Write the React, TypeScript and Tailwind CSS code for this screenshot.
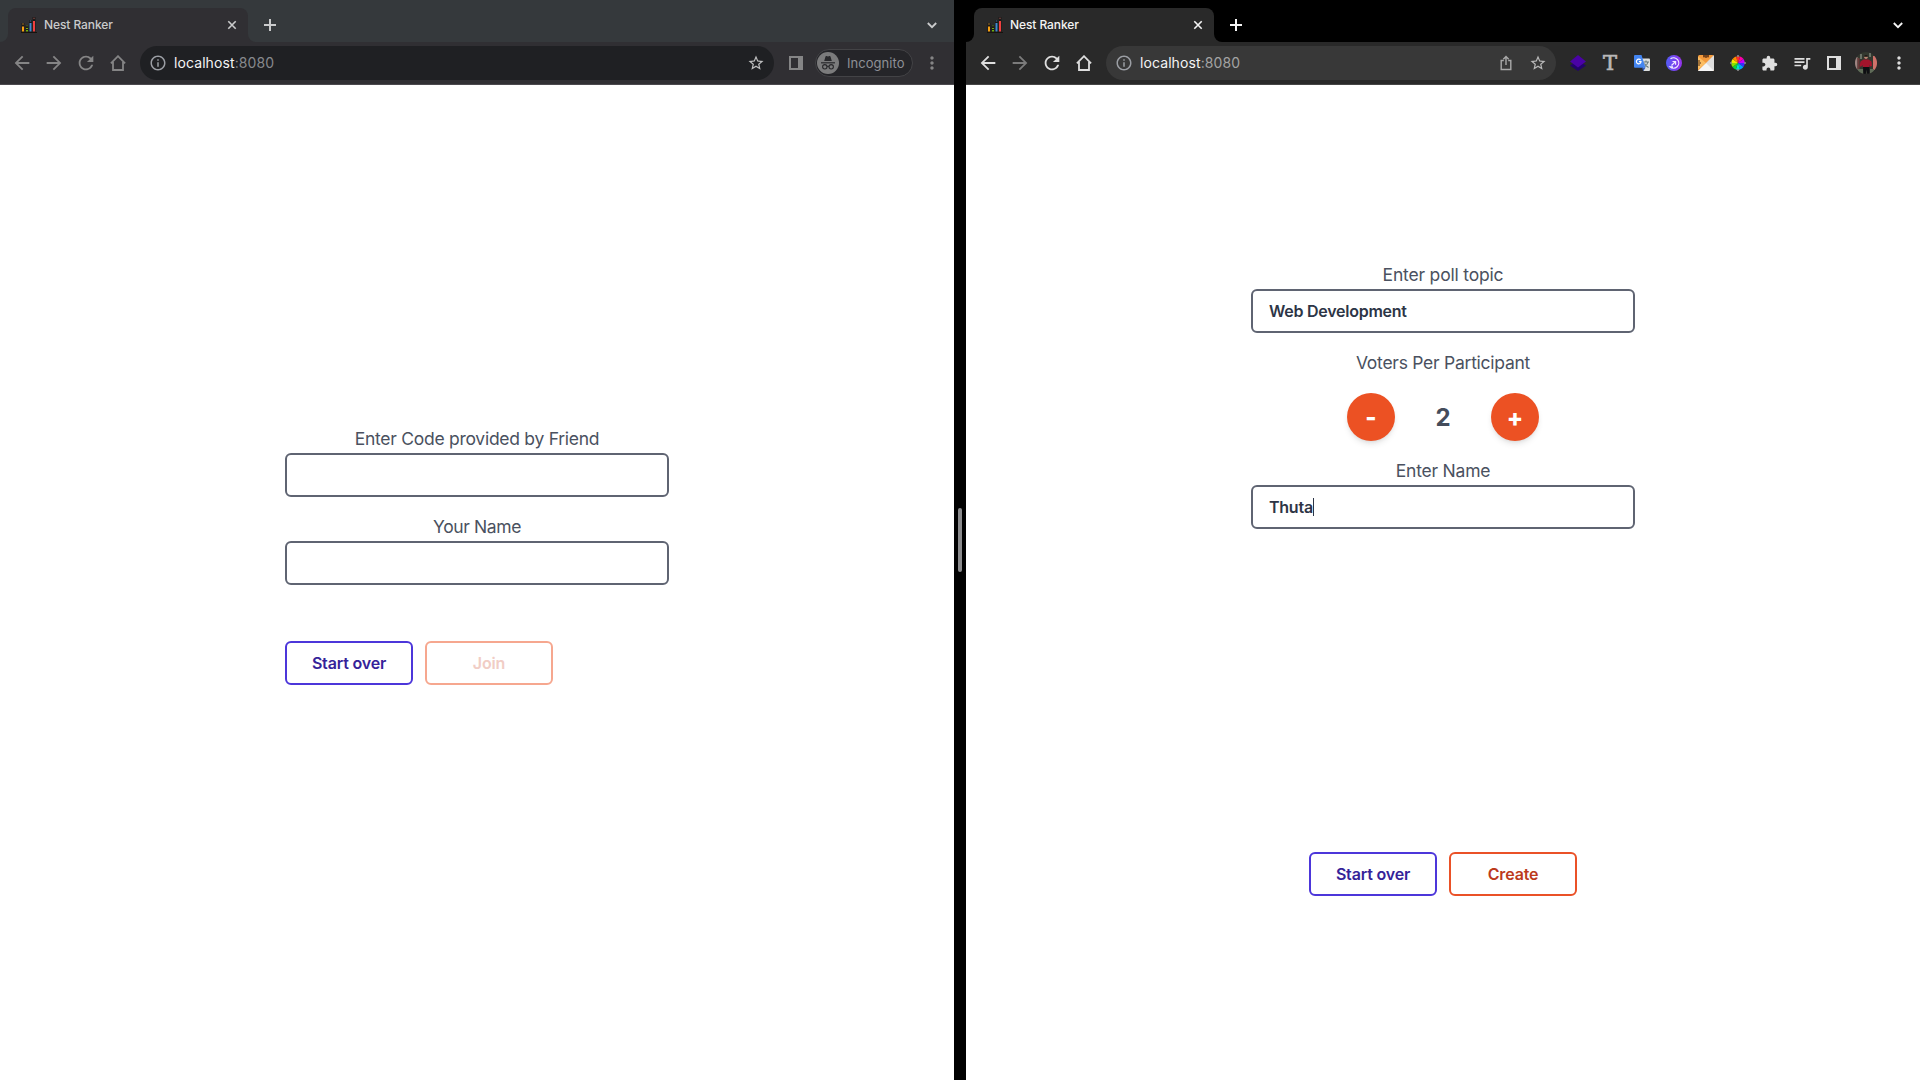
import type { ReactNode } from "react";
import {
  MdArrowBack,
  MdArrowForward,
  MdExtension,
  MdInfoOutline,
  MdMoreVert,
  MdQueueMusic,
  MdRefresh,
  MdStarBorder,
} from "react-icons/md";

function Favicon() {
  return (
    <svg width="16" height="16" viewBox="0 0 16 16" className="shrink-0">
      <path d="M0 15.500h16" stroke="#17130f" strokeWidth="1" />
      <path d="M2 6v9M6 8.500v6.500M9.500 3v12M13 0v15" stroke="#1c1917" strokeWidth="3" />
      <path d="M2 9.500v5" stroke="#f8a010" strokeWidth="2" />
      <path d="M6 11v1m0 1v1.500" stroke="#6fae10" strokeWidth="2" />
      <path d="M9.500 6v8.500" stroke="#3f8ad0" strokeWidth="2" />
      <path d="M13 4v10.500" stroke="#f04040" strokeWidth="2" />
      <path d="M2 6.500v1" stroke="#b88433" strokeWidth="1.600" />
      <path d="M6 8.500v.8" stroke="#5d8c1f" strokeWidth="1.600" />
      <path d="M9.500 3.500v1" stroke="#3b6f9c" strokeWidth="1.600" />
      <path d="M13 .8v1" stroke="#8d4a4a" strokeWidth="1.600" />
    </svg>
  );
}

function HomeIcon() {
  return (
    <svg width="16" height="16" viewBox="0 0 16 16" fill="none" stroke="currentColor" strokeWidth="1.800">
      <path d="M.9 8.300 8 1.200l7.100 7.100M3 7v8h10V7" strokeLinejoin="miter" />
    </svg>
  );
}

function PanelIcon() {
  return (
    <svg width="14" height="14" viewBox="0 0 14 14" fill="currentColor">
      <path fillRule="evenodd" d="M0 0h14v14H0zM2 2v10h7V2z" />
    </svg>
  );
}

function ShareIcon() {
  return (
    <svg width="12" height="16" viewBox="0 0 12 16" fill="none" stroke="currentColor" strokeWidth="1.400">
      <path d="M3.800 5.500H1.200v9h9.600v-9H8.200" />
      <path d="M6 10V1.800M3.300 4.300 6 1.600l2.700 2.700" />
    </svg>
  );
}

function ChevronDown() {
  return (
    <svg width="10" height="7" viewBox="0 0 10 7" fill="none" stroke="currentColor" strokeWidth="1.800">
      <path d="m.8 1 4.200 4.200L9.200 1" />
    </svg>
  );
}

function LayersIcon() {
  return (
    <svg width="16" height="16" viewBox="0 0 16 16">
      <path d="m0 10.500 8-5 8 5-8 5.500z" fill="#22036b" />
      <path d="m0 6.500 8-6.500 8 6.500-8 6z" fill="#4a02a6" />
    </svg>
  );
}

function TranslateIcon() {
  return (
    <svg width="16" height="16" viewBox="0 0 16 16">
      <path d="M7 3.500h8a1 1 0 0 1 1 1V15a1 1 0 0 1-1 1H9.500z" fill="#dcdedd" />
      <path d="M9.500 7h5.500M12 5.500V7M14 7c-.5 2.500-2 4-4 5.200M10.500 8.500c.8 1.800 2 3 4 4" stroke="#63777a" strokeWidth="1.100" fill="none" />
      <path d="M1 0h6.500l4 12.800H1a1 1 0 0 1-1-1V1a1 1 0 0 1 1-1z" fill="#4385f1" />
      <path d="M8 12.800h3.500L9.300 16z" fill="#3058b5" />
      <path d="M6.600 5.200A2.300 2.300 0 1 0 7 6.700H4.900" stroke="#fff" strokeWidth="1.200" fill="none" />
    </svg>
  );
}

function ArcIcon() {
  return (
    <svg width="16" height="16" viewBox="0 0 16 16">
      <defs>
        <linearGradient id="arc-fill" x1="0" y1="0" x2="1" y2="0">
          <stop offset="0" stopColor="#535cf5" />
          <stop offset="1" stopColor="#9632ec" />
        </linearGradient>
      </defs>
      <circle cx="8" cy="8" r="8" fill="url(#arc-fill)" />
      <g fill="none" stroke="#efe9ff" strokeWidth="1.200">
        <path d="M4.500 3.800A5.200 5.200 0 1 1 4 11.800H7" />
        <path d="M5.500 10.500 9.300 6.800M6.500 6.500h3.100v3.200" />
      </g>
    </svg>
  );
}

function RulerIcon() {
  return (
    <svg width="16" height="16" viewBox="0 0 16 16">
      <rect width="16" height="16" rx="1.500" fill="#f39a3c" />
      <path d="M0 16 16 0v14.500a1.500 1.500 0 0 1-1.500 1.500z" fill="#dedede" />
      <path d="M0 16 8 8l8 8z" fill="#f5f5f5" />
      <path d="M0 1.500v13L8 8z" fill="#fbbd62" />
      <path d="M5 0h6v2.500H5z" fill="#a85f20" />
      <path d="M6 0v2M8 0v3M10 0v2M0 6h2M0 8h3M0 10h2" stroke="#4a2b12" strokeWidth="1" />
    </svg>
  );
}

const WHEEL = ["#ff2a2a", "#ff00a8", "#c800ff", "#3a2cff", "#00a2ff", "#00e5d0", "#10d63a", "#8be000", "#f7e600", "#ff8a00"];

function WheelIcon() {
  const point = (i: number) => {
    const a = (i / WHEEL.length) * Math.PI * 2 - Math.PI / 2 - 0.3;
    return `${8 + 6.8 * Math.cos(a)} ${8 + 6.8 * Math.sin(a)}`;
  };
  return (
    <svg width="16" height="16" viewBox="0 0 16 16">
      {WHEEL.map((c, i) => (
        <path key={c} d={`M8 8L${point(i)}A6.8 6.8 0 0 1 ${point(i + 1)}z`} fill={c} />
      ))}
      <path d="M8 0v2M8 14v2M0 8h2M14 8h2" stroke="#8b8b8b" strokeWidth="1.600" />
    </svg>
  );
}

function Avatar() {
  return (
    <svg width="22" height="22" viewBox="0 0 22 22">
      <defs>
        <clipPath id="avatar-clip">
          <circle cx="11" cy="11" r="11" />
        </clipPath>
      </defs>
      <g clipPath="url(#avatar-clip)">
        <path d="M0 0h22v22H0z" fill="#33382f" />
        <path d="M0 5h2.500v13H0z" fill="#a08583" />
        <path d="M2.500 6h2v11h-2z" fill="#6b3a3a" />
        <path d="M18 4h4v14h-4z" fill="#d0716a" />
        <path d="M5 2h2v5H5zM14 1h2v4h-2z" fill="#6a7166" />
        <path d="M3 17h5v5H3zM15 17h4v5h-4z" fill="#5f6b58" />
        <path d="M5.500 9.500 8.500 7.500h5l3 2 .5 4.500-1.800.5-.7-2v2.500H7.700V13L6 14.800l-1.500-.6z" fill="#a3142c" />
        <path d="M8 15h6.500v7h-2.200l-.8-4.500-.8 4.500H8.500z" fill="#0e0e12" />
        <circle cx="11" cy="5.200" r="1.700" fill="#b98772" />
        <path d="M9.200 4.700a1.800 1.800 0 0 1 3.600 0z" fill="#15110f" />
      </g>
    </svg>
  );
}

function IncognitoBadge() {
  return (
    <div className="flex h-7 w-[98px] items-center rounded-full border border-[#434346] bg-[#252529] pl-[1px]">
      <svg width="22" height="22" viewBox="0 0 22 22" className="shrink-0">
        <circle cx="11" cy="11" r="11" fill="#7b7b7c" />
        <g fill="#29292c">
          <path d="M7.200 9 8.500 4.500q.3-.7 1-.4l1.500.4 1.500-.4q.7-.3 1 .4L14.800 9z" />
          <path d="M4 10.200h14v1.200H4z" />
        </g>
        <g fill="none" stroke="#29292c" strokeWidth="1.100">
          <circle cx="7.800" cy="14.800" r="2.200" />
          <circle cx="14.200" cy="14.800" r="2.200" />
          <path d="M10 14.500q1-.6 2 0" />
        </g>
      </svg>
      <span className="ml-2 pt-px text-[13px] tracking-[0.05px] text-[#8e9096]">Incognito</span>
    </div>
  );
}

function Cell({ children, className = "" }: { children: ReactNode; className?: string }) {
  return <span className={`flex h-8 w-8 shrink-0 items-center justify-center ${className}`}>{children}</span>;
}

function Browser({ incognito = false, children }: { incognito?: boolean; children: ReactNode }) {
  const strip = incognito ? "bg-[#35393c]" : "bg-black";
  const bar = incognito ? "bg-[#302f33]" : "bg-[#292929]";
  const icon = incognito ? "text-[#858586]" : "text-[#dedede]";
  const dim = incognito ? "text-[#858586]" : "text-[#7b7b7b]";
  const tabText = incognito ? "text-[#cacbcc]" : "text-[#f4f4f4]";
  return (
    <section className="flex h-full w-[954px] shrink-0 flex-col bg-white">
      <div className={`flex h-[42px] items-end ${strip}`}>
        <div className={`h-2 w-2 ${bar}`}>
          <div className={`h-2 w-2 rounded-br-lg ${strip}`} />
        </div>
        <div className={`flex h-[34px] w-[240px] items-center rounded-t-lg pr-[10px] pl-[13px] ${bar} ${tabText}`}>
          <Favicon />
          <span className="ml-[7px] flex-1 pb-px text-xs font-medium tracking-[-0.08px]">Nest Ranker</span>
          <svg width="12" height="12" viewBox="0 0 12 12" fill="none" stroke="currentColor" strokeWidth="1.600">
            <path d="m2.300 2.300 7.400 7.400m0-7.400L2.300 9.700" />
          </svg>
        </div>
        <div className={`h-2 w-2 ${bar}`}>
          <div className={`h-2 w-2 rounded-bl-lg ${strip}`} />
        </div>
        <div className={`flex h-[34px] flex-1 items-center justify-between pr-[17px] pl-2 ${tabText}`}>
          <svg width="12" height="12" viewBox="0 0 12 12" stroke="currentColor" strokeWidth="2">
            <path d="M6 0v12M0 6h12" />
          </svg>
          <ChevronDown />
        </div>
      </div>
      <div
        className={`flex h-[43px] items-center border-b px-[6px] ${bar} ${icon} ${incognito ? "border-[#4b494e]" : "border-[#454545]"}`}
      >
        <Cell><MdArrowBack size={22} /></Cell>
        <Cell className={dim}><MdArrowForward size={22} /></Cell>
        <Cell><MdRefresh size={22} /></Cell>
        <Cell><HomeIcon /></Cell>
        <div
          className={`mx-[6px] flex h-[34px] flex-1 items-center rounded-full pr-[2px] pl-[9px] ${incognito ? "bg-[#1f2023]" : "bg-[#383838]"}`}
        >
          <MdInfoOutline size={18} className="text-[#9b9ea4]" />
          <span className="ml-[7px] flex-1 text-sm tracking-[0.09px]">
            <span className="text-[#f4f4f4]">localhost</span>
            <span className={incognito ? "text-[#87898d]" : "text-[#a3a3a3]"}>:8080</span>
          </span>
          {!incognito && <Cell className="text-[#a9a9a9]"><ShareIcon /></Cell>}
          <Cell className={incognito ? "text-[#c0c0c1]" : "text-[#b9b9b9]"}>
            <MdStarBorder size={18} />
          </Cell>
        </div>
        {incognito ? (
          <>
            <Cell><PanelIcon /></Cell>
            <div className="ml-[3px]"><IncognitoBadge /></div>
            <Cell className="ml-[3px]"><MdMoreVert size={20} /></Cell>
          </>
        ) : (
          <>
            <Cell><LayersIcon /></Cell>
            <Cell>
              <span className="font-['DejaVu_Serif',serif] text-[21px] leading-none text-[#b8b8b8] [-webkit-text-stroke:0.7px_#b8b8b8]">T</span>
            </Cell>
            <Cell><TranslateIcon /></Cell>
            <Cell><ArcIcon /></Cell>
            <Cell><RulerIcon /></Cell>
            <Cell><WheelIcon /></Cell>
            <Cell><MdExtension size={17} className="mr-px" /></Cell>
            <Cell><MdQueueMusic size={20} /></Cell>
            <Cell><PanelIcon /></Cell>
            <Cell><Avatar /></Cell>
            <Cell><MdMoreVert size={20} className="ml-px" /></Cell>
          </>
        )}
      </div>
      <main className="flex flex-1 flex-col items-center">{children}</main>
    </section>
  );
}

function Field({ label, tracking, value, caret = false }: { label: string; tracking: string; value?: string; caret?: boolean }) {
  return (
    <div className="w-96">
      <p className={`text-center text-[17.5px] leading-7 text-[#4a5160] ${tracking}`}>{label}</p>
      <div className="flex h-11 items-center rounded-md border-2 border-[#5f6472] px-4">
        <span className="text-base font-semibold tracking-[-0.25px] text-[#2d3546]">{value}</span>
        {caret && <span className="h-[18px] w-px bg-[#2d3546]" />}
      </div>
    </div>
  );
}

function Button({ label, className }: { label: string; className: string }) {
  return (
    <div className={`flex h-11 w-32 items-center justify-center rounded-md border-2 text-base font-semibold tracking-[-0.18px] ${className}`}>
      {label}
    </div>
  );
}

const roundButton =
  "flex h-12 w-12 items-center justify-center rounded-full bg-[#ec5123] pt-0.5 text-2xl font-extrabold text-white shadow-md";

export default function App() {
  return (
    <div className="flex h-[1080px] w-[1920px] overflow-hidden bg-black font-['Inter',sans-serif]">
      <Browser incognito>
        <div className="flex w-96 flex-col pt-[340px]">
          <Field label="Enter Code provided by Friend" tracking="tracking-[-0.27px]" />
          <div className="mt-4">
            <Field label="Your Name" tracking="tracking-[-0.38px]" />
          </div>
          <div className="mt-14 flex gap-3">
            <Button label="Start over" className="border-[#4c36da] text-[#352399]" />
            <Button label="Join" className="border-[#f6a78f] text-[#f1cdc5]" />
          </div>
        </div>
      </Browser>
      <div className="flex w-3 shrink-0 items-center justify-center">
        <div className="h-16 w-1 rounded-full bg-[#8a8a8c]" />
      </div>
      <Browser>
        <div className="flex w-96 flex-col items-center pt-[176px]">
          <Field label="Enter poll topic" tracking="tracking-[-0.18px]" value="Web Development" />
          <p className="mt-4 text-[17.5px] leading-7 tracking-[-0.26px] text-[#4a5160]">Voters Per Participant</p>
          <div className="mt-4 mb-4 flex w-48 items-center justify-between">
            <div className={roundButton}>-</div>
            <span className="pt-0.5 text-2xl font-bold text-[#444c5b]">2</span>
            <div className={roundButton}>+</div>
          </div>
          <Field label="Enter Name" tracking="tracking-[-0.22px]" value="Thuta" caret />
          <div className="mt-[323px] flex gap-3">
            <Button label="Start over" className="border-[#4c36da] text-[#352399]" />
            <Button label="Create" className="border-[#ea5127] text-[#bc3a1c]" />
          </div>
        </div>
      </Browser>
    </div>
  );
}
